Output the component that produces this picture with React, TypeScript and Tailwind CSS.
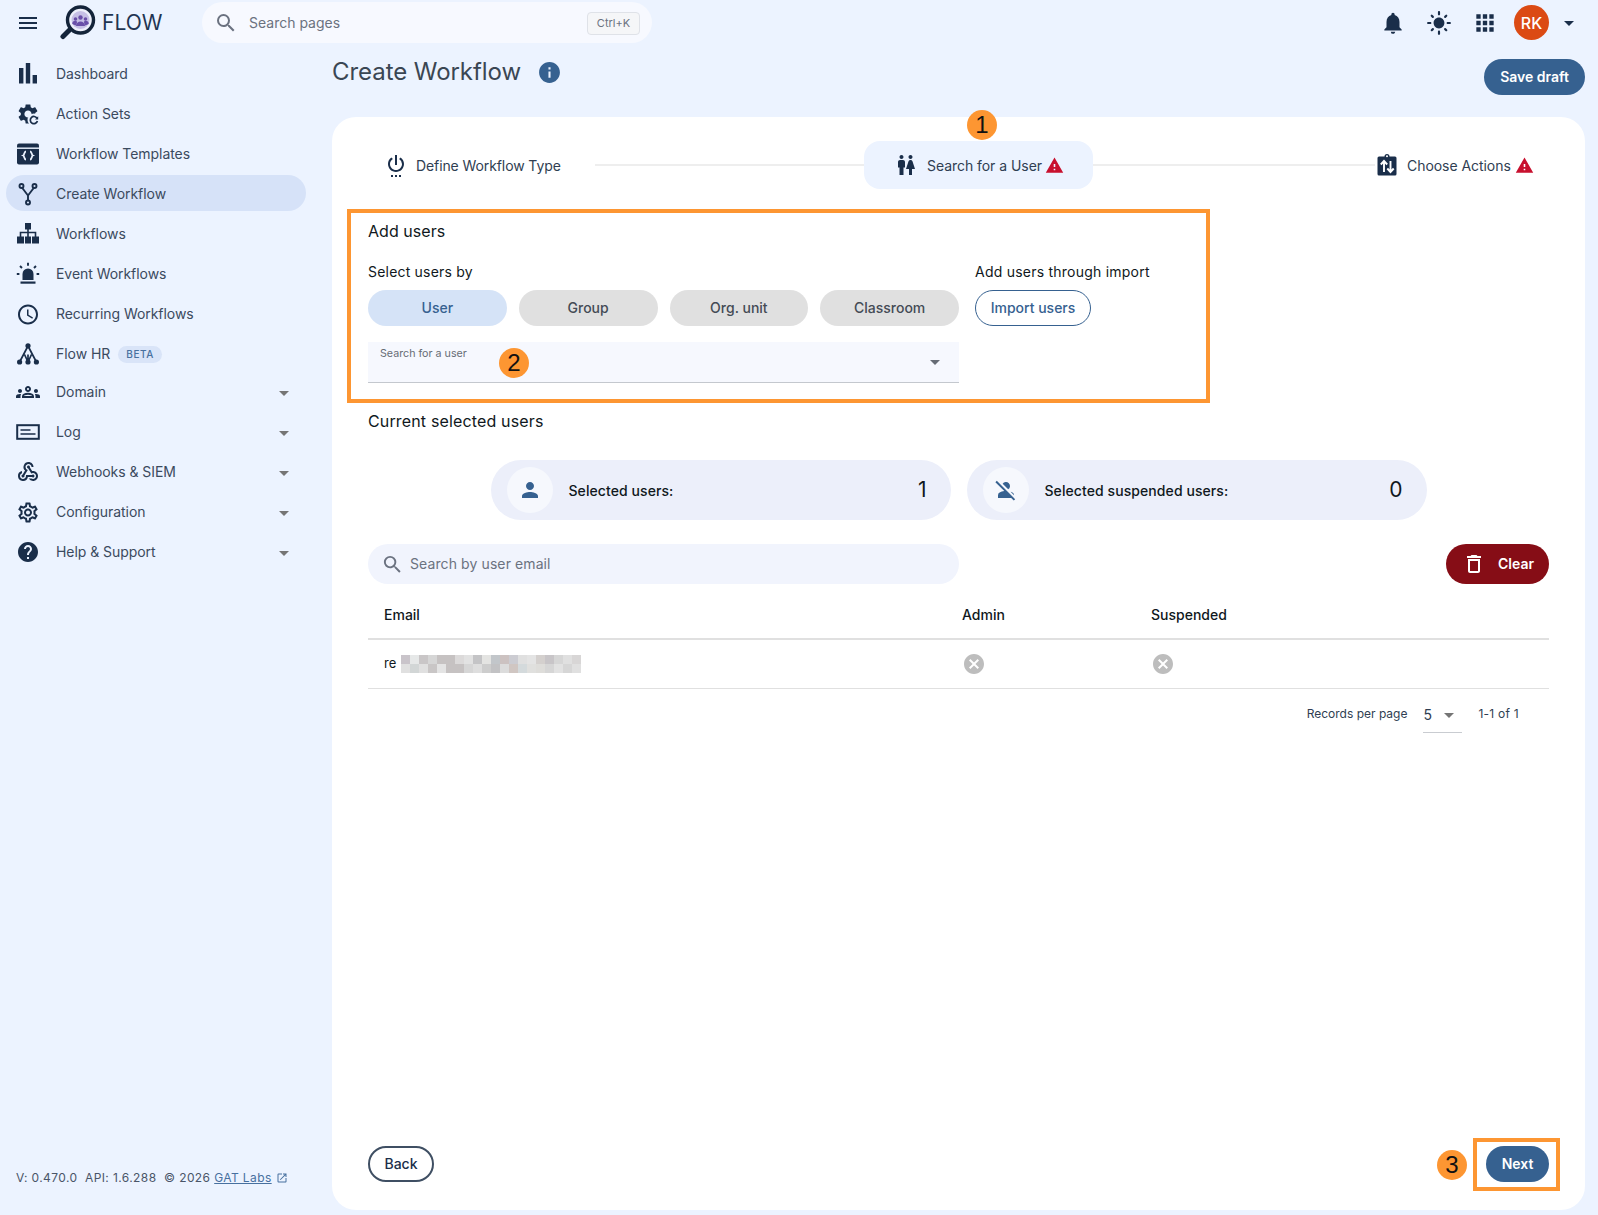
import React from "react";
import {
  MdMenu, MdSearch, MdNotifications, MdLightMode, MdApps, MdSettingsPower, MdWc, MdAccessTime,
  MdHelp, MdOutlineSettings, MdWebhook, MdOutlineGroups, MdOutlineDelete, MdCancel, MdPerson, MdPersonOff,
  MdOpenInNew, MdInfo, MdWarning, MdArrowDropDown,
} from "react-icons/md";

const NAVY = "#1a2e4a";

function Bars() {
  return (
    <svg width="24" height="24" viewBox="0 0 24 24" fill={NAVY}>
      <rect x="3" y="6" width="4.400" height="15.500" />
      <rect x="9.800" y="1" width="4.400" height="20.500" />
      <rect x="16.600" y="13" width="4.400" height="8.500" />
    </svg>
  );
}
function Hierarchy() {
  return (
    <svg width="24" height="24" viewBox="0 0 24 24" fill={NAVY}>
      <rect x="9" y="1" width="6" height="6.500" />
      <rect x="1" y="14.500" width="7" height="7" />
      <rect x="9" y="14.500" width="6" height="7" />
      <rect x="16" y="14.500" width="7" height="7" />
      <path d="M12 7v8M4.500 15v-4.500h15V15" fill="none" stroke={NAVY} strokeWidth="1.600" />
    </svg>
  );
}
function ActionSets() {
  return (
    <svg width="24" height="24" viewBox="0 0 24 24">
      <path fill={NAVY} d="M19.14 12.94c.04-.3.06-.61.06-.94 0-.32-.02-.64-.07-.94l2.03-1.58c.18-.14.23-.41.12-.61l-1.92-3.32c-.12-.22-.37-.29-.59-.22l-2.39.96c-.5-.38-1.03-.7-1.62-.94l-.36-2.54c-.04-.24-.24-.41-.48-.41h-3.84c-.24 0-.43.17-.47.41l-.36 2.54c-.59.24-1.13.57-1.62.94l-2.39-.96c-.22-.08-.47 0-.59.22L2.74 8.87c-.12.21-.08.47.12.61l2.03 1.58c-.05.3-.09.63-.09.94s.02.64.07.94l-2.03 1.58c-.18.14-.23.41-.12.61l1.92 3.32c.12.22.37.29.59.22l2.39-.96c.5.38 1.03.7 1.62.94l.36 2.54c.05.24.24.41.48.41h3.84c.24 0 .44-.17.47-.41l.36-2.54c.59-.24 1.13-.56 1.62-.94l2.39.96c.22.08.47 0 .59-.22l1.92-3.32c.12-.22.07-.47-.12-.61l-2.01-1.58zM12 15.6c-1.98 0-3.6-1.62-3.6-3.6s1.62-3.6 3.6-3.6 3.6 1.62 3.6 3.6-1.62 3.6-3.6 3.6z" />
      <circle cx="18" cy="18" r="6.500" fill="#ecf3ff" />
      <path d="M21 16.200A3.600 3.600 0 1 0 21.400 19" fill="none" stroke={NAVY} strokeWidth="1.700" />
      <path d="M22.200 14.200v3.200H19z" fill={NAVY} />
    </svg>
  );
}
function Templates() {
  return (
    <svg width="24" height="24" viewBox="0 0 24 24">
      <rect x="1" y="1.500" width="22" height="21" rx="2" fill={NAVY} />
      <rect x="1" y="5.500" width="22" height="1.400" fill="#ecf3ff" />
      <path d="M10 9.500c-2 0-1.400 3.400-2.800 4 1.400.6.8 4 2.800 4M14 9.500c2 0 1.400 3.400 2.800 4-1.400.6-.8 4-2.800 4" fill="none" stroke="#ecf3ff" strokeWidth="1.800" />
    </svg>
  );
}
function ForkIcon() {
  return (
    <svg width="24" height="24" viewBox="0 0 24 24" fill="none" stroke={NAVY} strokeWidth="1.900">
      <circle cx="5.500" cy="4" r="2" />
      <circle cx="18.500" cy="4" r="2" />
      <circle cx="12" cy="20.500" r="2" />
      <path d="M6.300 6 12 13.500 17.700 6M12 13.500v5" />
    </svg>
  );
}
function Siren() {
  return (
    <svg width="24" height="24" viewBox="0 0 24 24" fill={NAVY}>
      <path d="M6.500 18v-6a5.500 5.500 0 0 1 11 0v6z" />
      <rect x="4.500" y="19.500" width="15" height="2.200" />
      <path d="M12 .8v3M4 4l2 2M20 4l-2 2M.8 12h2.600M20.600 12h2.600" stroke={NAVY} strokeWidth="1.900" />
    </svg>
  );
}
function FlowHr() {
  return (
    <svg width="24" height="24" viewBox="0 0 24 24" fill={NAVY}>
      <circle cx="12" cy="3.800" r="2.600" />
      <circle cx="3.600" cy="20" r="2.600" />
      <circle cx="12" cy="20" r="2.600" />
      <circle cx="20.400" cy="20" r="2.600" />
      <path d="M12 4 3.600 20M12 4l8.400 16M12 12.500V20M8.500 12.500 12 20M15.500 12.500 12 20" stroke={NAVY} strokeWidth="1.700" fill="none" />
    </svg>
  );
}
function LogIcon() {
  return (
    <svg width="24" height="24" viewBox="0 0 24 24" fill="none">
      <rect x="1.200" y="5.200" width="21.600" height="13.600" stroke={NAVY} strokeWidth="2" />
      <path d="M4.500 10h10M4.500 14h15" stroke={NAVY} strokeWidth="1.600" />
    </svg>
  );
}
function ChooseIcon() {
  return (
    <svg width="24" height="24" viewBox="0 0 24 24">
      <path fill={NAVY} d="M4 3.500h5.500a2.500 2.500 0 0 1 5 0H20a1.500 1.500 0 0 1 1.500 1.500v16a1.500 1.500 0 0 1-1.500 1.500H4A1.500 1.500 0 0 1 2.500 21V5A1.500 1.500 0 0 1 4 3.500z" />
      <path d="M9 19V8.500M5.800 11.500 9 8l3.200 3.500M15.500 8v10.500M12.300 15.500l3.200 3.500 3.200-3.500" stroke="#fff" strokeWidth="1.900" fill="none" />
      <circle cx="12" cy="3.200" r="1" fill="#fff" />
    </svg>
  );
}
function Logo() {
  return (
    <svg width="36" height="36" viewBox="0 0 36 36" className="shrink-0">
      <path d="M9 25.500 3 31.500" stroke="#14243a" strokeWidth="5" strokeLinecap="round" />
      <circle cx="20.500" cy="15" r="13" fill="#eef0fb" stroke="#14243a" strokeWidth="3.400" />
      <circle cx="20.500" cy="15" r="9" fill="#c7c0e6" />
      <circle cx="20.500" cy="12.500" r="2.200" fill="#6a4fa8" />
      <circle cx="15.500" cy="14" r="1.800" fill="#6a4fa8" />
      <circle cx="25.500" cy="14" r="1.800" fill="#6a4fa8" />
      <path d="M16 21c0-6 9-6 9 0zM12.200 19c0-3.500 4-4 5-2l-1.500 3.500zM28.800 19c0-3.500-4-4-5-2l1.500 3.500z" fill="#6a4fa8" />
    </svg>
  );
}

const topItems: { label: string; icon: React.ReactNode; active?: boolean; beta?: boolean }[] = [
  { label: "Dashboard", icon: <Bars /> },
  { label: "Action Sets", icon: <ActionSets /> },
  { label: "Workflow Templates", icon: <Templates /> },
  { label: "Create Workflow", icon: <ForkIcon />, active: true },
  { label: "Workflows", icon: <Hierarchy /> },
  { label: "Event Workflows", icon: <Siren /> },
  { label: "Recurring Workflows", icon: <MdAccessTime size={25} color={NAVY} /> },
  { label: "Flow HR", icon: <FlowHr />, beta: true },
];
const subItems: { label: string; icon: React.ReactNode }[] = [
  { label: "Domain", icon: <MdOutlineGroups size={28} color={NAVY} /> },
  { label: "Log", icon: <LogIcon /> },
  { label: "Webhooks & SIEM", icon: <MdWebhook size={24} color={NAVY} /> },
  { label: "Configuration", icon: <MdOutlineSettings size={25} color={NAVY} /> },
  { label: "Help & Support", icon: <MdHelp size={26} color={NAVY} /> },
];

function NavRow({ label, icon, active, beta, caret }: { label: string; icon: React.ReactNode; active?: boolean; beta?: boolean; caret?: boolean }) {
  return (
    <div className="h-10 py-0.5 pl-1.5 pr-[26px]">
      <div className={`flex h-9 items-center rounded-[18px] pl-2.5 pr-2.5 ${active ? "-mt-px bg-[#d6e2f8] pt-[2px]" : ""}`}>
        <span className="flex h-6 w-6 shrink-0 items-center justify-center">{icon}</span>
        <span className="ml-4 text-sm tracking-[-0.05px] text-[#3b4a5e]">{label}</span>
        {beta && (
          <span className="ml-2 flex h-[17px] items-center rounded-full bg-[#d9e4f8] px-2 text-[10px] font-medium tracking-[0.55px] text-[#47709f]">
            BETA
          </span>
        )}
        {caret && (
          <span className="ml-auto flex w-6 justify-center pt-[2px]">
            <MdArrowDropDown size={24} color="#757575" />
          </span>
        )}
      </div>
    </div>
  );
}

const Chip = ({ label, active }: { label: string; active?: boolean }) => (
  <div className={`flex h-9 flex-1 items-center justify-center rounded-full text-sm font-medium ${active ? "bg-[#d5e3f7] text-[#366190]" : "bg-[#e0e0e0] text-[#444b55]"}`}>
    {label}
  </div>
);

const Badge = ({ n, className }: { n: number; className: string }) => (
  <div className={`absolute flex h-[30px] w-[30px] items-center justify-center rounded-full bg-[#fd9632] font-[Liberation_Sans,sans-serif] text-2xl text-[#111] ${className}`}>
    {n}
  </div>
);

const Stat = ({ label, value, icon }: { label: string; value: number; icon: React.ReactNode }) => (
  <div className="flex h-[60px] w-[460px] items-center rounded-[30px] bg-[#eceffa] pl-4 pr-6">
    <div className="flex h-[46px] w-[46px] items-center justify-center rounded-full bg-[#f6f8fd]">{icon}</div>
    <span className="ml-4 pt-px text-sm font-medium tracking-[0.08px] text-[#101820]">{label}</span>
    <span className="ml-auto text-[21px] text-[#101820]">{value}</span>
  </div>
);

const Warn = () => <MdWarning size={19} color="#c8102e" />;

const PIXELS = [
  ["transparent", "#c9c4ca", "#e6e8e8", "#c9c6c7", "#d6d6d6", "#c6c2c2", "#c6c2c2", "#dcdada", "#e2e2e2", "#c4c4c6", "#e4e4e2", "#c2c6ca", "#ccc2c1", "#ccccd2", "#e0e0e0", "#e4e4e4", "#d4d0ce", "#c8c5c8", "#d6d6d6", "#e0e0e0", "#d8d6d6"],
  ["transparent", "#e0e0e0", "#d2d6d6", "#e0e0e0", "#c9c6c6", "#e4e4e4", "#c6c2c2", "#c6c2c2", "#d6d6d6", "#dedede", "#cdcdcd", "#c2c2c4", "#dcdcdc", "#d0c6c2", "#d4dadc", "#e0e0de", "#deddda", "#d6d6d6", "#e2e2e2", "#d6d6d6", "#e0e0e0"],
];

export default function App() {
  return (
    <div className="flex h-[1215px] w-[1598px] flex-col overflow-hidden bg-[#ecf3ff] font-[Inter,sans-serif]">
      <header className="flex h-[45px] shrink-0 items-center pl-4 pr-[17px]">
        <MdMenu size={24} color={NAVY} />
        <span className="ml-5"><Logo /></span>
        <span className="ml-[6px] w-[62px] text-[21px] text-[#1f3552]">FLOW</span>
        <div className="ml-[38px] flex h-[41px] w-[450px] items-center rounded-full bg-[#f7f9ff] pl-3 pr-3">
          <MdSearch size={24} color="#6b7280" />
          <span className="ml-[11px] text-sm text-[#6b7280]">Search pages</span>
          <span className="ml-auto mt-px flex h-[23px] w-[53px] items-center justify-center rounded border border-[#dfe2e8] bg-[#f5f6f8] text-[11px] text-[#6b7280]">Ctrl+K</span>
        </div>
        <div className="ml-auto flex items-center gap-5">
          <MdNotifications size={26} color={NAVY} />
          <MdLightMode size={26} color={NAVY} />
          <MdApps size={26} color={NAVY} />
        </div>
        <div className="ml-[16px] flex h-[35px] w-[35px] items-center justify-center rounded-full bg-[#db4a14] text-base font-medium text-white">RK</div>
        <span className="ml-2"><MdArrowDropDown size={24} color={NAVY} /></span>
      </header>

      <div className="flex min-h-0 flex-1">
        <aside className="flex w-[332px] shrink-0 flex-col pt-[9px]">
          {topItems.map((it) => (
            <NavRow key={it.label} {...it} />
          ))}
          <div className="-mt-0.5">
            {subItems.map((it) => (
              <NavRow key={it.label} {...it} caret />
            ))}
          </div>
          <div className="mt-auto flex items-center pb-[29px] pl-4 text-xs tracking-[0.4px] text-[#4a5568]">
            <span className="whitespace-pre">V: 0.470.0  API: 1.6.288  © 2026 </span>
            <span className="text-[#47709f] underline">GAT Labs</span>
            <span className="ml-[4px]"><MdOpenInNew size={12} color="#47709f" /></span>
          </div>
        </aside>

        <main className="flex min-w-0 flex-1 flex-col pb-[5px] pr-[13px]">
          <div className="flex h-[72px] shrink-0 items-start">
            <h1 className="mt-[12px] text-2xl font-normal leading-[30px] tracking-[-0.06px] text-[#3a4653]">Create Workflow</h1>
            <span className="ml-[16px] mt-[15px]"><MdInfo size={25} color="#366190" /></span>
            <button className="ml-auto mt-[14px] h-9 w-[101px] rounded-full bg-[#366190] text-sm font-semibold text-white">Save draft</button>
          </div>

          <div className="relative flex flex-1 flex-col rounded-[24px] bg-white px-9 pb-7 pt-6">
            <div className="flex h-12 items-center">
              <span className="ml-4"><MdSettingsPower size={24} color={NAVY} /></span>
              <span className="ml-2 w-[179px] pt-[2px] text-sm tracking-[-0.1px] text-[#2f3e52]">Define Workflow Type</span>
              <div className="h-0.5 w-[269px] bg-[#eeeeee]" />
              <div className="flex h-12 w-[229px] items-center rounded-[16px] bg-[#ecf3ff] pl-[30px]">
                <MdWc size={24} color={NAVY} />
                <span className="ml-[9px] pt-[2px] text-sm tracking-[-0.05px] text-[#2f3e52]">Search for a User</span>
                <span className="ml-[3px]"><Warn /></span>
              </div>
              <div className="h-0.5 w-[282px] bg-[#eeeeee]" />
              <span><ChooseIcon /></span>
              <span className="ml-[8px] pt-[2px] text-sm tracking-[-0.05px] text-[#2f3e52]">Choose Actions</span>
              <span className="ml-[4px]"><Warn /></span>
            </div>

            <div className="mt-[30px] text-base tracking-[0.05px] text-[#101820]">Add users</div>
            <div className="mt-[19px] flex">
              <div className="w-[591px]">
                <div className="text-sm tracking-[0.2px] text-[#101820]">Select users by</div>
                <div className="mt-2 flex gap-3">
                  <Chip label="User" active />
                  <Chip label="Group" />
                  <Chip label="Org. unit" />
                  <Chip label="Classroom" />
                </div>
                <div className="relative mt-4 h-[41px] border-b border-[#c4c8ce] bg-[#f6f8fe] pl-3 pt-[4px]">
                  <div className="text-[10.7px] text-[#666c75]">Search for a user</div>
                  <span className="absolute right-[12px] top-[8px]"><MdArrowDropDown size={24} color="#666c75" /></span>
                </div>
              </div>
              <div className="ml-4">
                <div className="text-sm tracking-[0.23px] text-[#101820]">Add users through import</div>
                <button className="mt-2 h-9 w-[116px] rounded-full border border-[#366190] text-sm font-medium text-[#366190]">Import users</button>
              </div>
            </div>

            <div className="mt-[26px] text-base tracking-[0.15px] text-[#101820]">Current selected users</div>

            <div className="mt-[27px] flex justify-center gap-4">
              <Stat label="Selected users:" value={1} icon={<MdPerson size={24} color="#366190" />} />
              <Stat label="Selected suspended users:" value={0} icon={<MdPersonOff size={24} color="#366190" />} />
            </div>

            <div className="mt-6 flex items-center justify-between">
              <div className="flex h-10 w-[591px] items-center rounded-full bg-[#f1f4fd] pl-[13px]">
                <MdSearch size={23} color="#6b7280" />
                <span className="ml-[6px] text-sm tracking-[0.1px] text-[#6b7280]">Search by user email</span>
              </div>
              <button className="flex h-10 w-[103px] items-center rounded-full bg-[#860d16] pl-4 text-sm font-semibold text-white">
                <MdOutlineDelete size={24} color="#fff" />
                <span className="ml-3">Clear</span>
              </button>
            </div>

            <div className="flex h-14 items-center border-b-2 border-[#e0e0e0] pt-2 text-sm font-medium text-[#101820]">
              <span className="ml-4 w-[578px]">Email</span>
              <span className="w-[189px]">Admin</span>
              <span>Suspended</span>
            </div>
            <div className="flex h-[49px] items-center border-b border-[#e0e0e0] text-[13px] text-[#101820]">
              <div className="ml-4 flex w-[578px] items-center">
                <span>re</span>
                <div className="-ml-1 grid grid-cols-[repeat(21,9px)] grid-rows-[9px_9px]">
                  {PIXELS.flat().map((c, i) => (
                    <div key={i} style={{ backgroundColor: c }} />
                  ))}
                </div>
              </div>
              <span className="w-[189px]"><MdCancel size={24} color="#bdbdbd" /></span>
              <MdCancel size={24} color="#bdbdbd" />
            </div>

            <div className="flex h-[50px] items-center justify-end pr-[30px] text-xs text-[#2f3e52]">
              <span>Records per page</span>
              <div className="ml-4 flex h-[38px] w-[39px] items-center border-b border-[#c9ccd1] pt-[2px] text-sm">
                <span>5</span>
                <MdArrowDropDown size={24} color="#757575" className="ml-[5px]" />
              </div>
              <span className="ml-4 tracking-[0.25px]">1-1 of 1</span>
            </div>

            <div className="mt-auto flex items-center justify-between">
              <button className="h-9 w-[66px] rounded-full border-2 border-[#3f4f63] text-sm font-medium text-[#1a2e4a]">Back</button>
              <button className="h-9 w-[63px] rounded-full bg-[#366190] text-sm font-semibold text-white">Next</button>
            </div>

            <div className="absolute left-[15px] top-[92px] h-[194px] w-[863px] border-4 border-[#fd9632]" />
            <div className="absolute left-[1141px] top-[1021px] h-[53px] w-[87px] border-4 border-[#fd9632]" />
            <Badge n={1} className="left-[635px] top-[-7px]" />
            <Badge n={2} className="left-[167px] top-[231px]" />
            <Badge n={3} className="left-[1105px] top-[1033px]" />
          </div>
        </main>
      </div>
    </div>
  );
}
